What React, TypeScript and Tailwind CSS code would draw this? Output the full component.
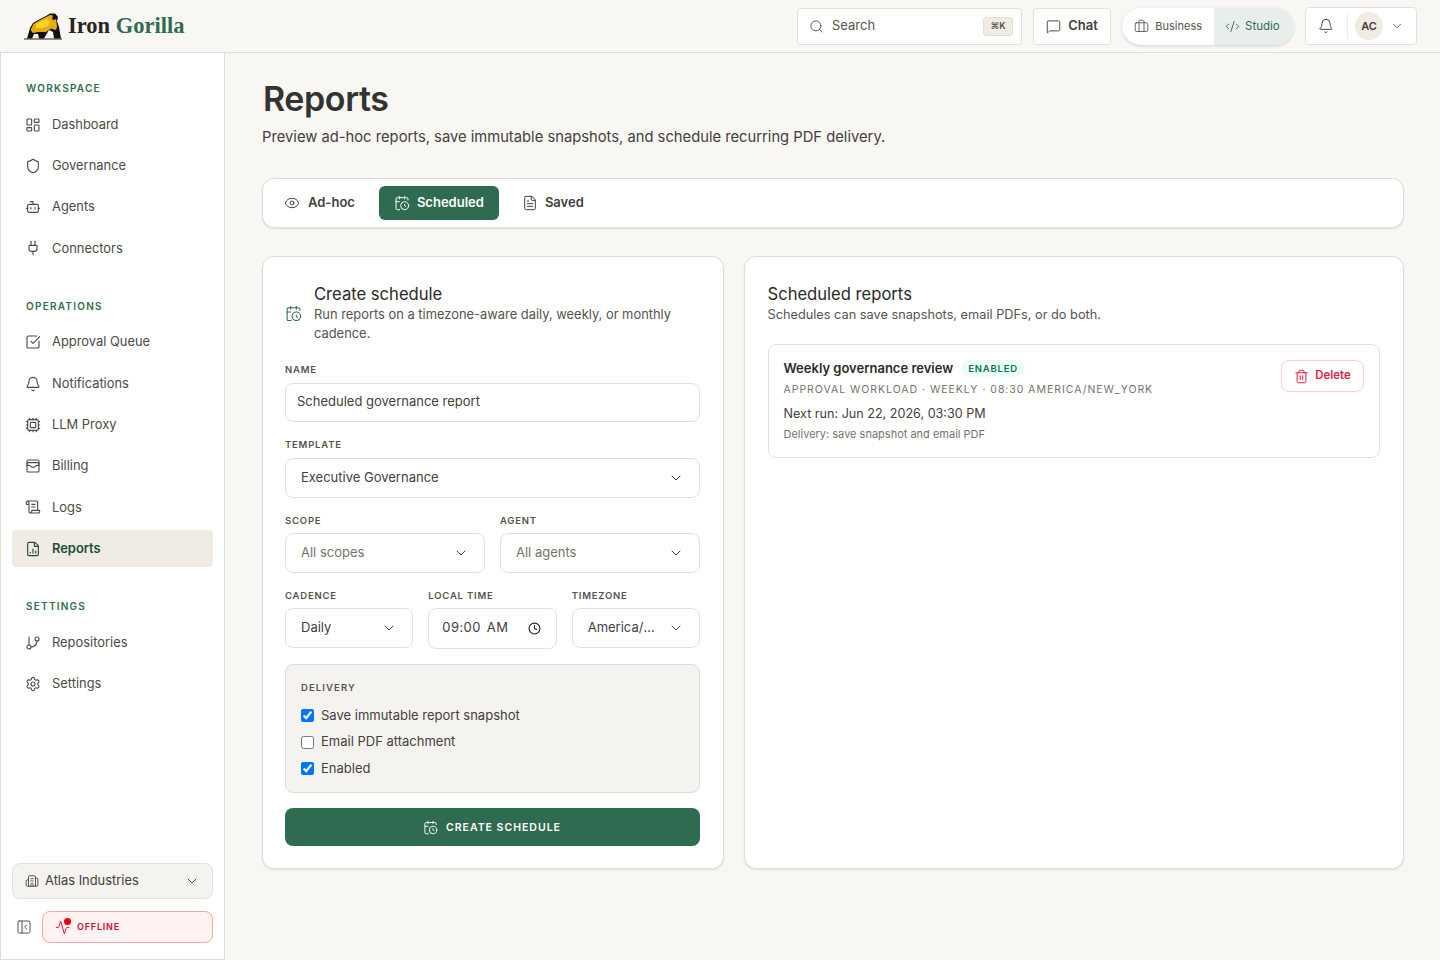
import React from "react";
import {
  LayoutDashboard, Shield, Bot, Plug, SquareCheckBig, Bell, Cpu, WalletCards, ScrollText, FileChartColumn,
  GitBranch, Settings, Building2, ChevronDown, PanelLeftClose, Activity, Search, MessageSquare, Briefcase,
  CodeXml, Eye, CalendarClock, FileText, Trash2, Clock,
} from "lucide-react";

const font = { fontFamily: "Inter, sans-serif" };

function Logo() {
  return (
    <svg width="38" height="27" viewBox="0 0 38 27" className="shrink-0">
      <path d="M0 25.4h38v1.1H0z" fill="#222" />
      <path d="M3 25.5 L6 15 L9 10 L16 6 L22 3 L26 0.5 L31 0.5 L34 4 L33 8 L35 14 L37 25.5 L30 25.5 L29 19 L25 17 L22 22 L20 25.5 L15 25.5 L14 21 L10 21 L8 25.5 Z" fill="#111" />
      <path d="M6.5 17 L9.5 11 L16 7 L22 4 L26 2 L29 2.5 L28 6 L30 7 L32 6 L32.5 9 L33 14 L32 17 L27 15.5 L22 19 L14 19 L9 20 Z" fill="#e5ac12" />
      <path d="M12 11 L18 8 L23 6 L26 9 L24 13 L18 15 L12 15Z" fill="#fbd02c" />
    </svg>
  );
}

function NavItem({ icon: Icon, label, active }: { icon: any; label: string; active?: boolean }) {
  return (
    <div className={`flex h-[37px] items-center gap-[11px] rounded-[4px] px-[13px] text-[12.9px] ${active ? "bg-[#f0ebe3] font-semibold text-[#1f4d38]" : "text-[#4b4b47]"}`}>
      <Icon size={16} strokeWidth={1.7} className="shrink-0" />
      <span>{label}</span>
    </div>
  );
}

function Section({ title, children }: { title: string; children: React.ReactNode }) {
  return (
    <div>
      <div className="mb-[11px] pl-[14px] text-[10px] leading-[14px] font-semibold tracking-[1.25px] text-[#2f6b50]">{title}</div>
      <div className="flex flex-col gap-[4.33px]">{children}</div>
    </div>
  );
}

function Label({ children, tight }: { children: React.ReactNode; tight?: boolean }) {
  return <div className={`${tight ? "mb-[5px]" : "mb-[6px]"} text-[9.5px] leading-[14px] font-semibold tracking-[0.8px] text-[#57534e]`}>{children}</div>;
}

function Select({ value, muted }: { value: string; muted?: boolean }) {
  return (
    <div className="flex h-[40px] items-center justify-between rounded-[8px] border border-[#e3e1dc] bg-white pr-[15px] pl-[15px]">
      <span className={`truncate text-[13px] ${muted ? "text-[#78716c]" : "text-[#44403c]"}`}>{value}</span>
      <ChevronDown size={16} strokeWidth={1.5} className="ml-2 shrink-0 text-[#44403c]" />
    </div>
  );
}

function Check({ label, checked }: { label: string; checked?: boolean }) {
  return (
    <label className="flex items-center gap-[7px] text-[13px] text-[#44403c]">
      <input type="checkbox" defaultChecked={checked} className="m-0 h-[13px] w-[13px]" />
      {label}
    </label>
  );
}

export default function App() {
  return (
    <div style={font} className="flex h-[960px] w-[1440px] flex-col overflow-hidden bg-[#f8f7f3] text-[#2b2b28]">
      <header className="flex h-[53px] shrink-0 items-center justify-between border-b border-[#dfddd8] pr-[23px] pl-[24px]">
        <div className="flex items-center gap-[6px]">
          <Logo />
          <span className="text-[22.5px] leading-none font-bold whitespace-nowrap" style={{ fontFamily: '"Liberation Serif", serif' }}>
            <span className="text-[#262624]">Iron</span> <span className="text-[#2f6b50]">Gorilla</span>
          </span>
        </div>
        <div className="flex items-center">
          <div className="flex h-[37px] w-[225px] items-center gap-[8px] rounded-[4px] border border-[#e3e1dc] bg-white pr-[8px] pl-[11px] text-[13px] text-[#57534e]">
            <Search size={15} strokeWidth={1.5} />
            <span className="flex-1">Search</span>
            <span className="flex h-[19px] w-[30px] items-center justify-center rounded-[3px] border border-[#dfddd8] bg-[#f0ebe3] text-[9px] font-semibold">⌘K</span>
          </div>
          <div className="ml-[11px] flex h-[37px] w-[78px] items-center justify-center gap-[7px] rounded-[4px] border border-[#e3e1dc] bg-white text-[13px] font-semibold text-[#44403c]">
            <MessageSquare size={15} strokeWidth={1.5} />
            Chat
          </div>
          <div className="ml-[11px] flex h-[37px] w-[172px] overflow-hidden rounded-full bg-white text-[11px] shadow-[0_1px_3px_rgba(0,0,0,0.16)]">
            <div className="flex w-[92px] items-center justify-end gap-[6px] pr-[12px] text-[#57534e]">
              <Briefcase size={15} strokeWidth={1.4} />
              Business
            </div>
            <div className="flex flex-1 items-center gap-[5px] bg-[#e8eeeb] pl-[11px] text-[11.5px] text-[#2f6b50]">
              <CodeXml size={15} strokeWidth={1.5} />
              <span className="pt-px">Studio</span>
            </div>
          </div>
          <div className="ml-[11px] flex h-[38px] w-[112px] items-center rounded-[4px] border border-[#e3e1dc] bg-white pl-[12px]">
            <Bell size={16} strokeWidth={1.5} className="text-[#44403c]" />
            <span className="ml-[13px] h-[24px] w-px bg-[#eeece8]" />
            <span className="ml-[7px] flex h-[28px] w-[28px] items-center justify-center rounded-full bg-[#f0ebe3] text-[11px] font-semibold text-[#44403c]">AC</span>
            <ChevronDown size={14} strokeWidth={1.5} className="ml-[7px] text-[#57534e]" />
          </div>
        </div>
      </header>

      <div className="flex min-h-0 flex-1">
        <aside className="flex w-[225px] shrink-0 flex-col border-x border-b border-[#dfddd8] bg-white pt-[28px] pr-[11px] pb-[16px] pl-[11px]">
          <div className="flex flex-1 flex-col gap-[31.7px]">
            <Section title="WORKSPACE">
              <NavItem icon={LayoutDashboard} label="Dashboard" />
              <NavItem icon={Shield} label="Governance" />
              <NavItem icon={Bot} label="Agents" />
              <NavItem icon={Plug} label="Connectors" />
            </Section>
            <Section title="OPERATIONS">
              <NavItem icon={SquareCheckBig} label="Approval Queue" />
              <NavItem icon={Bell} label="Notifications" />
              <NavItem icon={Cpu} label="LLM Proxy" />
              <NavItem icon={WalletCards} label="Billing" />
              <NavItem icon={ScrollText} label="Logs" />
              <NavItem icon={FileChartColumn} label="Reports" active />
            </Section>
            <Section title="SETTINGS">
              <NavItem icon={GitBranch} label="Repositories" />
              <NavItem icon={Settings} label="Settings" />
            </Section>
          </div>
          <div className="flex h-[36px] items-center gap-[6px] rounded-[8px] border border-[#e3e1dc] bg-[#f5f3ef] pr-[12px] pl-[12px] text-[12.9px] text-[#44403c]">
            <Building2 size={14} strokeWidth={1.5} />
            <span className="flex-1">Atlas Industries</span>
            <ChevronDown size={16} strokeWidth={1.5} />
          </div>
          <div className="mt-[12px] flex items-center gap-[10px] pl-[4px]">
            <PanelLeftClose size={16} strokeWidth={1.5} className="shrink-0 text-[#57534e]" />
            <div className="flex h-[32px] flex-1 items-center gap-[7px] rounded-[8px] border border-[#fca5a5] bg-[#fef2f2] pl-[12px] text-[9px] font-semibold tracking-[0.8px] text-[#c8102e]">
              <span className="relative">
                <Activity size={15} strokeWidth={1.5} />
                <span className="absolute -top-[2px] -right-[1px] h-[7px] w-[7px] rounded-full bg-[#e7000b]" />
              </span>
              OFFLINE
            </div>
          </div>
        </aside>

        <main className="min-w-0 flex-1 pt-[24px] pr-[36px] pl-[37px]">
          <h1 className="ml-px text-[34px] leading-[44px] font-semibold tracking-[-0.4px] text-[#33332f]">Reports</h1>
          <p className="mt-[4px] text-[14.75px] leading-[24px] text-[#44403c]">Preview ad-hoc reports, save immutable snapshots, and schedule recurring PDF delivery.</p>

          <div className="mt-[29px] flex h-[50px] items-center rounded-[12px] border border-[#dfddd8] bg-white pl-[5px] text-[13px] font-semibold text-[#44403c] shadow-[0_1px_2px_rgba(0,0,0,0.1)]">
            <div className="ml-[16px] flex items-center gap-[8px]">
              <Eye size={16} strokeWidth={1.5} />
              Ad-hoc
            </div>
            <div className="ml-[24px] flex h-[34px] w-[120px] items-center justify-center gap-[7px] rounded-[6px] bg-[#2f6b50] text-white">
              <CalendarClock size={16} strokeWidth={1.5} />
              Scheduled
            </div>
            <div className="ml-[23px] flex items-center gap-[7px]">
              <FileText size={16} strokeWidth={1.5} />
              Saved
            </div>
          </div>

          <div className="mt-[28px] flex gap-[20px]">
            <section className="flex h-[613px] w-[462px] shrink-0 flex-col rounded-[12px] border border-[#dfddd8] bg-white pt-[26px] pr-[23px] pl-[22px] shadow-[0_1px_2px_rgba(0,0,0,0.1)]">
              <div className="flex items-center gap-[12px]">
                <CalendarClock size={17} strokeWidth={1.5} className="shrink-0 text-[#2f6b50]" />
                <div>
                  <h2 className="text-[16.6px] leading-[22px] text-[#2b2b28]">Create schedule</h2>
                  <p className="text-[12.9px] leading-[19px] text-[#57534e]">Run reports on a timezone-aware daily, weekly, or monthly cadence.</p>
                </div>
              </div>
              <div className="mt-[20px]">
                <Label>NAME</Label>
                <div className="flex h-[39px] items-center rounded-[8px] border border-[#e3e1dc] pb-[2px] pl-[11px] text-[13px] text-[#44403c]">Scheduled governance report</div>
              </div>
              <div className="mt-[16px]">
                <Label>TEMPLATE</Label>
                <Select value="Executive Governance" />
              </div>
              <div className="mt-[16px] grid grid-cols-2 gap-[15px]">
                <div><Label tight>SCOPE</Label><Select value="All scopes" muted /></div>
                <div><Label tight>AGENT</Label><Select value="All agents" muted /></div>
              </div>
              <div className="mt-[16px] grid grid-cols-3 gap-[15px]">
                <div><Label tight>CADENCE</Label><Select value="Daily" /></div>
                <div>
                  <Label tight>LOCAL TIME</Label>
                  <div className="flex h-[41px] items-center justify-between rounded-[8px] border border-[#e3e1dc] pr-[15px] pb-px pl-[13px] text-[13px] tracking-[0.4px] [word-spacing:2px] text-[#44403c]">
                    09:00 AM
                    <Clock size={13} strokeWidth={2} className="text-[#222]" />
                  </div>
                </div>
                <div><Label tight>TIMEZONE</Label><Select value="America/New_York" /></div>
              </div>
              <div className="mt-[15px] h-[129px] rounded-[8px] border border-[#dfddd8] bg-[#f5f3ef] pt-[16px] pl-[15px]">
                <div className="text-[9.5px] leading-[14px] font-semibold tracking-[1.1px] text-[#57534e]">DELIVERY</div>
                <div className="mt-[10.9px] flex flex-col gap-[7px] leading-[19.5px]">
                  <Check label="Save immutable report snapshot" checked />
                  <Check label="Email PDF attachment" />
                  <Check label="Enabled" checked />
                </div>
              </div>
              <div className="mt-[15px] flex h-[38px] items-center justify-center gap-[8px] rounded-[8px] bg-[#2f6b50] pr-px text-[10.5px] font-semibold tracking-[1px] text-white">
                <CalendarClock size={15} strokeWidth={1.5} />
                <span className="pt-px">CREATE SCHEDULE</span>
              </div>
            </section>

            <section className="h-[613px] flex-1 rounded-[12px] border border-[#dfddd8] bg-white pt-[26px] pr-[23px] pl-[22.5px] shadow-[0_1px_2px_rgba(0,0,0,0.1)]">
              <h2 className="text-[16.6px] leading-[22px] text-[#2b2b28]">Scheduled reports</h2>
              <p className="text-[12.75px] leading-[19px] text-[#57534e]">Schedules can save snapshots, email PDFs, or do both.</p>
              <div className="mt-[20px] flex h-[114px] items-start justify-between rounded-[8px] border border-[#e3e1dc] px-[15px] pt-[15px]">
                <div>
                  <div className="flex items-center gap-[8px]">
                    <span className="text-[13px] leading-[17px] font-semibold text-[#2b2b28]">Weekly governance review</span>
                    <span className="rounded-full bg-[#ecfdf5] px-[7px] text-[9.5px] leading-[17px] font-semibold tracking-[0.8px] text-[#047857]">ENABLED</span>
                  </div>
                  <div className="mt-[5px] text-[10.5px] leading-[15px] tracking-[0.97px] text-[#78716c]">APPROVAL WORKLOAD · WEEKLY · 08:30 AMERICA/NEW_YORK</div>
                  <div className="mt-[7px] text-[12.6px] leading-[19px] text-[#44403c]">Next run: Jun 22, 2026, 03:30 PM</div>
                  <div className="mt-[3px] text-[11px] leading-[17px] text-[#78716c]">Delivery: save snapshot and email PDF</div>
                </div>
                <div className="flex h-[32px] w-[83px] items-center justify-center gap-[6px] rounded-[8px] border border-[#fecdd3] text-[11.5px] font-semibold text-[#e11d48]">
                  <Trash2 size={15} strokeWidth={1.6} />
                  Delete
                </div>
              </div>
            </section>
          </div>
        </main>
      </div>
    </div>
  );
}
